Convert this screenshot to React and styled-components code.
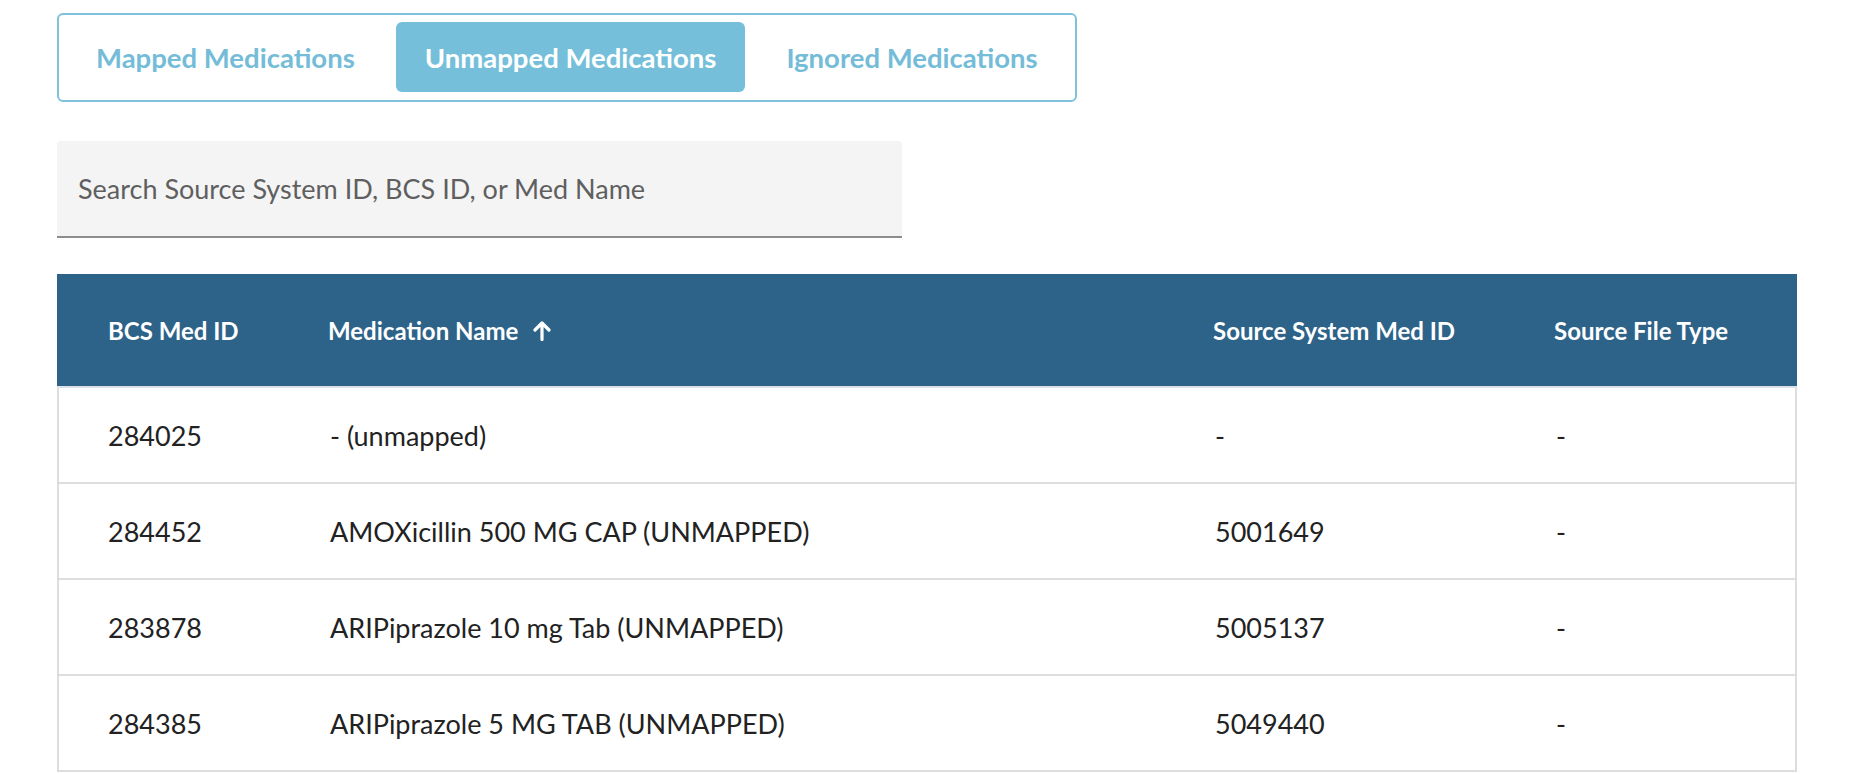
import styled, { createGlobalStyle } from 'styled-components'

const GlobalStyle = createGlobalStyle`
  body {
    margin: 0;
    background: #ffffff;
    font-family: Lato, "Open Sans", sans-serif;
    color: #222222;
  }
`

const Page = styled.div`
  width: 1740px;
  padding: 13px 0 0 57px;
  display: flex;
  flex-direction: column;
  align-items: flex-start;
`

const TabGroup = styled.div`
  display: inline-flex;
  gap: 12px;
  padding: 7px 8px 8px;
  border: 2px solid #7fc2db;
  border-radius: 6px;
`

const Tab = styled.button`
  height: 70px;
  padding: 0 29px;
  border: none;
  border-radius: 6px;
  display: flex;
  align-items: center;
  font-family: inherit;
  font-size: 27.5px;
  font-weight: 700;
  color: ${p => (p.$active ? '#ffffff' : '#74bcd8')};
  background: ${p => (p.$active ? '#75bfdb' : 'transparent')};
  cursor: pointer;
`

const SearchBox = styled.div`
  margin-top: 39px;
  width: 845px;
  height: 95px;
  background: #f4f4f4;
  border-bottom: 2px solid #8c8c8c;
  border-radius: 4px 4px 0 0;
  display: flex;
  align-items: center;
`

const SearchInput = styled.input`
  flex: 1;
  height: 100%;
  padding: 0 21px;
  border: none;
  background: transparent;
  font-family: inherit;
  font-size: 27px;
  color: #222;
  outline: none;

  &::placeholder {
    color: #5f5f5f;
  }
`

const Table = styled.div`
  margin-top: 36px;
  width: 100%;
`

const columns = '220px 885px 341px 1fr'

const HeaderRow = styled.div`
  display: grid;
  grid-template-columns: ${columns};
  height: 112px;
  background: #2e6389;
  border-bottom: 2px solid #dbe1e6;
`

const HeaderCell = styled.div`
  display: flex;
  align-items: center;
  gap: 14px;
  padding-left: 51px;
  font-size: 24px;
  font-weight: 700;
  color: #ffffff;
`

const Body = styled.div`
  border-left: 2px solid #dddddd;
  border-right: 2px solid #dddddd;
`

const Row = styled.div`
  display: grid;
  grid-template-columns: ${columns};
  height: 94px;
  border-bottom: 2px solid #dddddd;
`

const Cell = styled.div`
  display: flex;
  align-items: center;
  padding-left: ${p => (p.$first ? '49px' : '51px')};
  font-size: 27px;
  color: #222222;
  white-space: nowrap;
`

const SortArrow = () => (
  <svg width="20" height="21" viewBox="0 0 20 21" fill="none">
    <path d="M10 19.5V3M3 10L10 3L17 10" stroke="#fff" strokeWidth="3.2" strokeLinecap="round" strokeLinejoin="round" />
  </svg>
)

const meds = [
  { id: '284025', name: '- (unmapped)', source: '-', type: '-' },
  { id: '284452', name: 'AMOXicillin 500 MG CAP (UNMAPPED)', source: '5001649', type: '-' },
  { id: '283878', name: 'ARIPiprazole 10 mg Tab (UNMAPPED)', source: '5005137', type: '-' },
  { id: '284385', name: 'ARIPiprazole 5 MG TAB (UNMAPPED)', source: '5049440', type: '-' },
]

const App = () => {
  return (
    <>
      <GlobalStyle />
      <Page>
        <TabGroup>
          <Tab>Mapped Medications</Tab>
          <Tab $active>Unmapped Medications</Tab>
          <Tab>Ignored Medications</Tab>
        </TabGroup>
        <SearchBox>
          <SearchInput placeholder="Search Source System ID, BCS ID, or Med Name" />
        </SearchBox>
        <Table>
          <HeaderRow>
            <HeaderCell>BCS Med ID</HeaderCell>
            <HeaderCell>
              Medication Name <SortArrow />
            </HeaderCell>
            <HeaderCell>Source System Med ID</HeaderCell>
            <HeaderCell>Source File Type</HeaderCell>
          </HeaderRow>
          <Body>
            {meds.map(m => (
              <Row key={m.id}>
                <Cell $first>{m.id}</Cell>
                <Cell>{m.name}</Cell>
                <Cell>{m.source}</Cell>
                <Cell>{m.type}</Cell>
              </Row>
            ))}
          </Body>
        </Table>
      </Page>
    </>
  )
}

export default App
